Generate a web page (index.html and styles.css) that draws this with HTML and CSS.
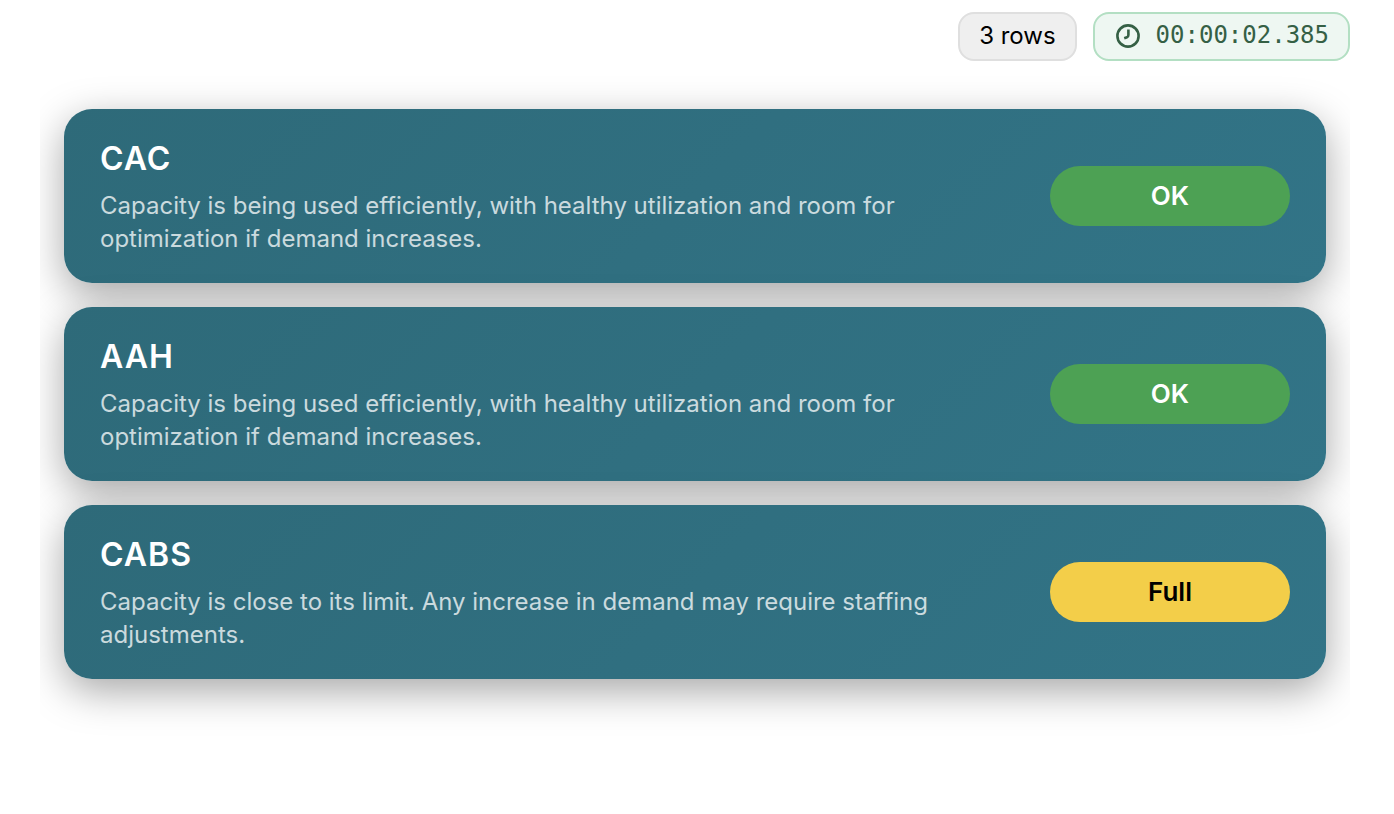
FILE: index.html
```html
<!DOCTYPE html>
<html lang="en">
<head>
    <meta charset="UTF-8">
    <meta name="viewport" content="width=device-width, initial-scale=1.0">
    <title>Capacity</title>
    <link rel="stylesheet" href="styles.css">
</head>
<body>
    <div class="toolbar">
        <span class="badge">3 rows</span>
        <span class="badge timer">
            <svg class="clock" viewBox="0 0 24 24" width="24" height="24" fill="none" stroke="currentColor" stroke-width="2.6" aria-hidden="true">
                <circle cx="12" cy="12" r="10.6"/>
                <path d="M12.4 5.4v5.6q0 1.7-1.4 2.2l-2.8 1"/>
            </svg>
            00:00:02.385
        </span>
    </div>

    <main class="output">
        <section class="card">
            <div class="info">
                <h2>CAC</h2>
                <p>Capacity is being used efficiently, with healthy utilization and room for optimization if demand increases.</p>
            </div>
            <span class="status ok">OK</span>
        </section>
        <section class="card">
            <div class="info">
                <h2>AAH</h2>
                <p>Capacity is being used efficiently, with healthy utilization and room for optimization if demand increases.</p>
            </div>
            <span class="status ok">OK</span>
        </section>
        <section class="card">
            <div class="info">
                <h2>CABS</h2>
                <p>Capacity is close to its limit. Any increase in demand may require staffing adjustments.</p>
            </div>
            <span class="status full">Full</span>
        </section>
    </main>
</body>
</html>
```
FILE: styles.css
```css
* {
    box-sizing: border-box;
}
body {
    font-family: Inter, "Liberation Sans", sans-serif;
    font-size: 24px;
    background-color: #fff;
    margin: 0;
    padding: 12px 44px 0 40px;
}
.toolbar {
    display: flex;
    justify-content: flex-end;
    gap: 16px;
}
.badge {
    display: flex;
    align-items: center;
    padding: 7px 19px 9px;
    line-height: 29px;
    color: #000;
    background-color: #efefef;
    border: 2px solid #dfdfdf;
    border-radius: 16px;
}
.timer {
    gap: 16px;
    padding-left: 21px;
    font-family: "DejaVu Sans Mono", monospace;
    color: #356045;
    background-color: #eef7f2;
    border-color: #b3dfc3;
}
.output {
    display: flex;
    flex-direction: column;
    gap: 24px;
    padding: 48px 24px 80px;
    overflow: hidden;
}
.card {
    display: flex;
    align-items: center;
    justify-content: space-between;
    gap: 36px;
    padding: 28px 36px;
    color: #fff;
    background: linear-gradient(135deg, #2e6a79, #327487);
    border-radius: 28px;
    box-shadow: 0 12px 40px rgba(0, 0, 0, 0.35);
}
.info {
    max-width: 840px;
}
h2 {
    margin: 0 0 8px;
    font-size: 32px;
    line-height: 44px;
    font-weight: 600;
    letter-spacing: 1px;
}
p {
    margin: 0;
    line-height: 33px;
    color: rgba(255, 255, 255, 0.75);
}
.status {
    flex: none;
    width: 240px;
    padding: 14px 0;
    font-size: 26px;
    line-height: 32px;
    font-weight: 600;
    text-align: center;
    border-radius: 30px;
}
.ok {
    background-color: #4da154;
}
.full {
    color: #000;
    background-color: #f3ce49;
}
```
